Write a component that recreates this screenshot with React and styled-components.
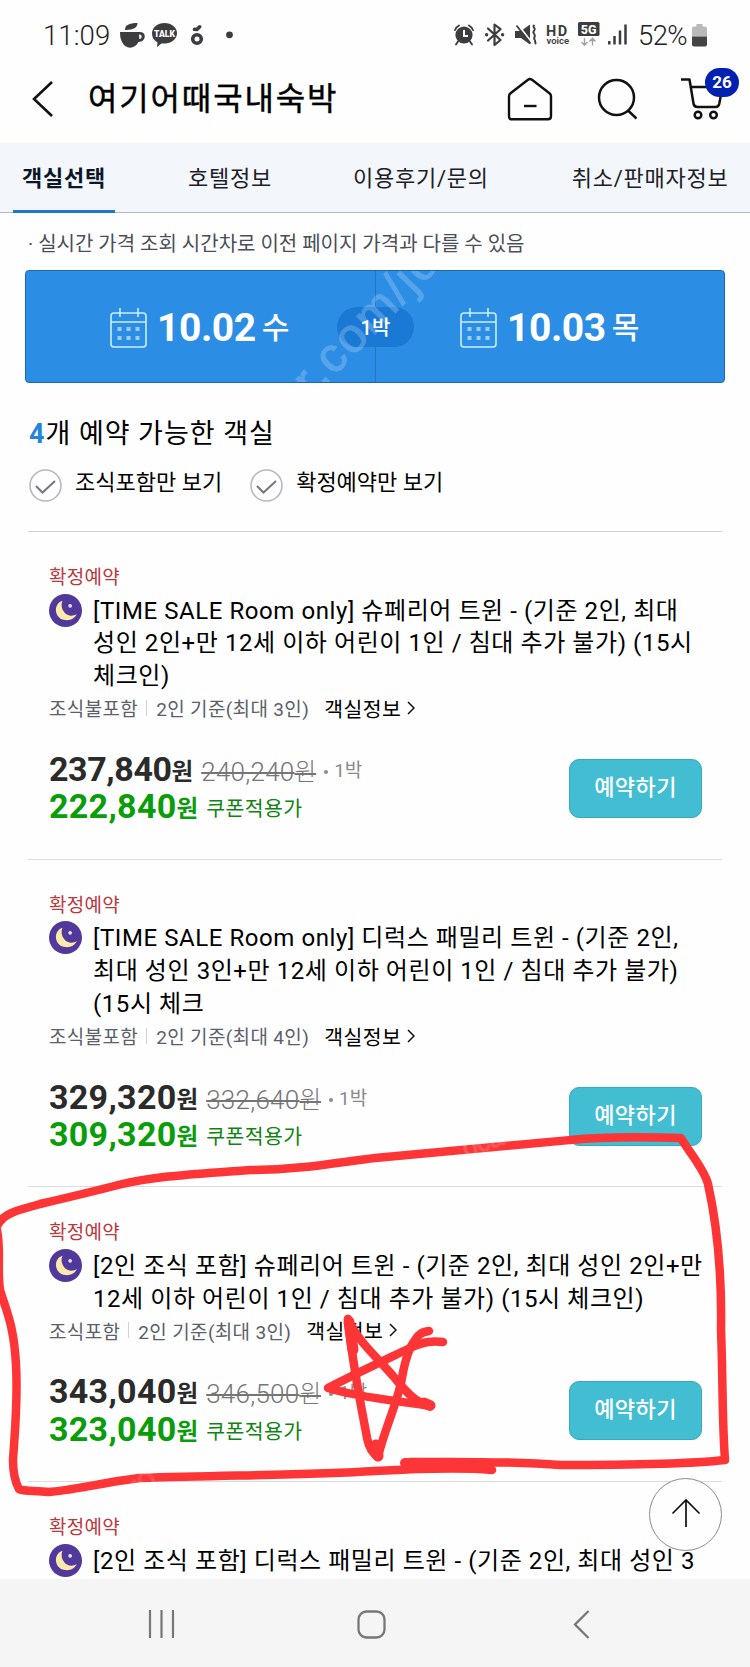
import React from "react";
import styled, { createGlobalStyle } from "styled-components";

const GlobalStyle = createGlobalStyle`
  * {
    box-sizing: border-box;
  }
  body {
    margin: 0;
    background: #fefefe;
    font-family: Roboto, "Noto Sans CJK KR", sans-serif;
    color: #111;
  }
  svg {
    display: block;
    flex: none;
  }
`;

const Screen = styled.div`
  position: relative;
  display: flex;
  flex-direction: column;
  width: 750px;
  height: 1667px;
  overflow: hidden;
  background: #fefefe;
  white-space: nowrap;
`;

const StatusBar = styled.div`
  display: flex;
  align-items: center;
  justify-content: space-between;
  height: 70px;
  padding: 0 43px;
  flex: none;
`;

const StatusGroup = styled.div`
  display: flex;
  align-items: center;
`;

const StatusText = styled.span`
  width: ${(p) => p.$width}px;
  padding-left: ${(p) => p.$pad || 0}px;
  font-size: 27.5px;
  font-weight: 300;
  letter-spacing: ${(p) => p.$spacing}px;
  color: #222;
`;

const Header = styled.header`
  display: flex;
  align-items: center;
  height: 73px;
  padding: 0 21px 15px 32px;
  flex: none;
`;

const HeaderTitle = styled.h1`
  flex: 1;
  margin: 0 0 0 34px;
  font-size: 32px;
  line-height: 42px;
  font-weight: 400;
  letter-spacing: 1.85px;
  color: #000;
  -webkit-text-stroke: 0.4px #000;
`;

const HeaderIcons = styled.div`
  display: flex;
  align-items: center;
  gap: 44px;
`;

const CartWrapper = styled.div`
  position: relative;
`;

const CartBadge = styled.span`
  position: absolute;
  left: 24px;
  top: -10px;
  width: 34px;
  height: 29px;
  border-radius: 15px;
  background: #0220b2;
  color: #fff;
  font-size: 17px;
  font-weight: 700;
  line-height: 29px;
  text-align: center;
`;

const Tabs = styled.nav`
  display: flex;
  height: 70px;
  padding: 0 0 0 13px;
  background: #f3f6fb;
  border-bottom: 1px solid #b3b9c3;
  flex: none;
`;

const Tab = styled.span`
  height: 70px;
  margin-left: ${(p) => p.$gap || 0}px;
  padding: 0 ${(p) => (p.$active ? 9 : 0)}px;
  border-bottom: 3px solid ${(p) => (p.$active ? "#2277c8" : "transparent")};
  font-size: 22px;
  font-weight: ${(p) => (p.$active ? 700 : 400)};
  letter-spacing: 0.75px;
  line-height: 71px;
  color: ${(p) => (p.$active ? "#0b1626" : "#1c2026")};
`;

const Notice = styled.p`
  margin: 0;
  padding-left: 28px;
  height: 57px;
  font-size: 20px;
  line-height: 62px;
  color: #4a4e58;
  flex: none;
`;

const DateBar = styled.div`
  position: relative;
  display: grid;
  grid-template-columns: 1fr 1fr;
  width: 700px;
  height: 113px;
  margin-left: 25px;
  border: 1px solid #1a68b4;
  border-radius: 4px;
  background: #2c8de5;
  flex: none;
`;

const DateCell = styled.div`
  display: flex;
  align-items: center;
  padding: 2px 0 0 84px;
  color: #fff;
  & + & {
    border-left: 1px solid #1f76c8;
  }
`;

const DateNumber = styled.b`
  margin-left: 10px;
  font-size: 39px;
  line-height: 50px;
  letter-spacing: -0.4px;
`;

const DateDay = styled.span`
  margin-left: 6px;
  font-size: 30px;
  font-weight: 500;
  line-height: 50px;
`;

const NightBadge = styled.span`
  position: absolute;
  left: 311px;
  top: 36px;
  width: 77px;
  height: 40px;
  border-radius: 20px;
  background: #1b79d6;
  color: #fff;
  font-size: 20px;
  font-weight: 500;
  line-height: 42px;
  text-align: center;
`;

const RoomCount = styled.h2`
  margin: 0;
  padding: 32px 0 0 29px;
  height: 82px;
  font-size: 27px;
  font-weight: 400;
  line-height: 38px;
  letter-spacing: 0.95px;
  color: #000;
  flex: none;
  b {
    color: #2384da;
  }
`;

const Filters = styled.div`
  display: flex;
  height: 66px;
  padding: 4px 0 0 29px;
  gap: 28px;
  flex: none;
`;

const Filter = styled.label`
  display: flex;
  gap: 13px;
  font-size: 22px;
  line-height: 28px;
  color: #000;
`;

const RoomList = styled.div`
  height: 1048px;
  margin: 0 28px;
  overflow: hidden;
  border-top: 1px solid #d4d4d4;
  flex: none;
`;

const RoomCard = styled.article`
  padding: 30px 20px 34px 21px;
  border-bottom: 1px solid #dcdcdc;
`;

const Tag = styled.div`
  height: 31.8px;
  font-size: 19px;
  line-height: 31px;
  letter-spacing: 0.3px;
  color: #b8383d;
`;

const TitleRow = styled.div`
  display: flex;
  gap: 11px;
`;

const RoomTitle = styled.div`
  font-size: 24px;
  line-height: 32.7px;
  letter-spacing: 0.57px;
  color: #000;
`;

const TitleLine = styled.div`
  height: 32.7px;
  padding-top: 1px;
`;

const Meta = styled.div`
  display: flex;
  align-items: center;
  height: 32px;
  margin-bottom: 26px;
  font-size: 19px;
  letter-spacing: 0.35px;
  color: #5b5f69;
`;

const MetaDivider = styled.i`
  width: 1px;
  height: 16px;
  margin: 0 9px 0 8px;
  background: #d0d2d6;
`;

const InfoLink = styled.span`
  display: flex;
  align-items: center;
  gap: 6px;
  margin-left: 15px;
  font-size: 20.5px;
  letter-spacing: 0.4px;
  color: #000;
`;

const PriceArea = styled.div`
  display: flex;
  justify-content: space-between;
`;

const PriceRow = styled.div`
  display: flex;
  align-items: baseline;
  height: 37.4px;
  line-height: 38px;
  color: ${(p) => p.$color};
`;

const Won = styled.span`
  font-size: 23.5px;
  letter-spacing: 0;
  line-height: 1;
  vertical-align: 1px;
`;

const Amount = styled.b`
  font-size: 34px;
  letter-spacing: ${(p) => p.$spacing}px;
`;

const OldPrice = styled.s`
  margin-left: 8px;
  font-size: 26px;
  font-weight: 300;
  letter-spacing: 0.25px;
  color: #757575;
  text-decoration-thickness: 2px;
`;

const Nights = styled.span`
  display: flex;
  align-items: center;
  gap: 6px;
  margin-left: 8px;
  align-self: flex-start;
  font-size: 19px;
  line-height: 41px;
  color: #8a8a8a;
  &::before {
    content: "";
    width: 4px;
    height: 4px;
    margin-top: 3px;
    border-radius: 50%;
    background: #8a8a8a;
  }
`;

const CouponLabel = styled.span`
  margin-left: 8px;
  align-self: flex-start;
  font-size: 20.5px;
  line-height: 44px;
  letter-spacing: 0.4px;
  color: #108410;
`;

const BookButton = styled.button`
  width: 133px;
  height: 59px;
  margin-top: 9px;
  padding: 0 0 7px;
  border: 1px solid #35a9bd;
  border-radius: 10px;
  background: #42bdd2;
  color: #fff;
  font: 500 22px Roboto, "Noto Sans CJK KR", sans-serif;
  letter-spacing: 0.4px;
`;

const SystemNav = styled.div`
  display: flex;
  align-items: center;
  gap: 181px;
  height: 88px;
  padding: 2px 0 0 147px;
  background: #f5f5f5;
  flex: none;
`;

const TopButton = styled.div`
  position: absolute;
  left: 649px;
  top: 1478px;
  width: 73px;
  height: 73px;
  border: 1px solid #8a8a8a;
  border-radius: 50%;
  background: #fefefe;
  display: flex;
  align-items: center;
  justify-content: center;
  padding-bottom: 3px;
`;

const Drawing = styled.svg`
  position: absolute;
  left: 0;
  top: 0;
  pointer-events: none;
`;

const rooms = [
  {
    title: [
      "[TIME SALE Room only] 슈페리어 트윈 - (기준 2인, 최대",
      "성인 2인+만 12세 이하 어린이 1인 / 침대 추가 불가) (15시",
      "체크인)",
    ],
    meal: "조식불포함",
    people: "2인 기준(최대 3인)",
    price: "237,840",
    priceSpacing: -0.4,
    old: "240,240",
    coupon: "222,840",
  },
  {
    title: [
      "[TIME SALE Room only] 디럭스 패밀리 트윈 - (기준 2인,",
      "최대 성인 3인+만 12세 이하 어린이 1인 / 침대 추가 불가)",
      "(15시 체크",
    ],
    meal: "조식불포함",
    people: "2인 기준(최대 4인)",
    price: "329,320",
    priceSpacing: 0.3,
    old: "332,640",
    coupon: "309,320",
  },
  {
    title: [
      "[2인 조식 포함] 슈페리어 트윈 - (기준 2인, 최대 성인 2인+만",
      "12세 이하 어린이 1인 / 침대 추가 불가) (15시 체크인)",
    ],
    meal: "조식포함",
    people: "2인 기준(최대 3인)",
    price: "343,040",
    priceSpacing: 0.3,
    old: "346,500",
    coupon: "323,040",
  },
  {
    title: ["[2인 조식 포함] 디럭스 패밀리 트윈 - (기준 2인, 최대 성인 3"],
  },
];

function LeftStatusIcons() {
  return (
    <svg width="118" height="30" viewBox="118 20 118 30" fill="#3d3d3f">
      <path d="M120 32h20.500c6 0 6 10-2 10c-4 7.500-13 7.500-16.500 0c-1.500-3-2-6-2-10z" />
      <path d="M139 34.500c3.500-.5 3.500 4.500 .3 4.500z" fill="#fefefe" />
      <path d="M125 30c0-5 4-7 12.500-7c0 4-3 7-12.500 7z" />
      <path d="M164.500 23c7 0 12.500 4.600 12.500 10.300s-5.500 10.200-12.500 10.200l-3 0-4.500 3.500.5-4.600c-3.500-1.900-5.500-5-5.500-9.100c0-5.700 5.500-10.300 12.500-10.300z" />
      <text
        x="164.500"
        y="37"
        fill="#fff"
        fontSize="8.600"
        fontWeight="900"
        textAnchor="middle"
        fontFamily="Roboto"
      >
        TALK
      </text>
      <circle cx="197" cy="39" r="4.300" fill="none" stroke="#3d3d3f" strokeWidth="3.600" />
      <path d="M194.500 29.300l2.500.2 2.700-2.700" stroke="#3d3d3f" strokeWidth="3.600" strokeLinecap="round" fill="none" />
      <circle cx="229.500" cy="34.800" r="3.400" />
    </svg>
  );
}

function RightStatusIcons() {
  return (
    <svg width="180" height="30" viewBox="452 20 180 30" fill="#3d3d3f">
      <circle cx="464" cy="35" r="8.600" />
      <path
        d="M455 30a9 9 0 0 1 4-4.500M473 30a9 9 0 0 0-4-4.500M458 41.500l-2 3M470 41.500l2 3"
        stroke="#3d3d3f"
        strokeWidth="1.900"
        strokeLinecap="round"
        fill="none"
      />
      <path d="M464 30v6h4" stroke="#fff" strokeWidth="2" fill="none" />
      <path
        d="M488 28.500l12.500 11.500-6 5v-20.500l6 4.700-12.500 11.300"
        stroke="#3d3d3f"
        strokeWidth="2.200"
        strokeLinejoin="round"
        strokeLinecap="round"
        fill="none"
      />
      <circle cx="486.600" cy="34.700" r="1.700" />
      <circle cx="502.600" cy="34.700" r="1.700" />
      <path d="M515 31h6l9-6.500v20l-9-6.500h-6z" />
      <path d="M517.500 24l14 18" stroke="#fefefe" strokeWidth="1.800" />
      <path d="M516.500 25.500l14 18" stroke="#3d3d3f" strokeWidth="1.800" />
      <path
        d="M534.500 25c-3 2 1.500 3 0 5s-1.500 2.500 0 4.500s-1.500 3 0 5s0 3 1.500 4.500"
        stroke="#3d3d3f"
        strokeWidth="2"
        fill="none"
      />
      <text fontFamily="Roboto">
        <tspan x="546" y="35.500" fontSize="14.500" fontWeight="700" letterSpacing="1.600">
          HD
        </tspan>
        <tspan x="546.500" y="43.500" fontSize="9.500" fontWeight="600">
          voice
        </tspan>
      </text>
      <rect x="578" y="22" width="21.500" height="14" rx="1.500" />
      <text x="588.700" y="33.500" fill="#fff" fontSize="12.500" fontWeight="800" textAnchor="middle" fontFamily="Roboto">
        5G
      </text>
      <path
        d="M584.500 38v7m-3-3l3 3.300 3-3.300M592.500 45.500v-7m-3 3l3-3.300 3 3.300"
        stroke="#a2a2a2"
        strokeWidth="1.400"
        fill="none"
      />
      <path
        d="M609.300 41v3.500M614.500 36v8.500M620 30.500v14M625.500 24.500v20"
        stroke="#3d3d3f"
        strokeWidth="2.500"
      />
    </svg>
  );
}

function Battery() {
  return (
    <svg width="15" height="23" viewBox="0 0 15 23">
      <path d="M4.500 0h6v2.500h2.500a2 2 0 0 1 2 2v8h-15v-8a2 2 0 0 1 2-2h2.500z" fill="#b9b9b9" />
      <path d="M0 12.500h15v8a2 2 0 0 1-2 2h-11a2 2 0 0 1-2-2z" fill="#444" />
    </svg>
  );
}

function Calendar() {
  const dots = [];
  for (let row = 0; row < 2; row++) {
    for (let col = 0; col < 3; col++) {
      dots.push(
        <rect key={`${row}-${col}`} x={7.5 + col * 9} y={19 + row * 9} width="4" height="4" fill="#9dcdf8" />
      );
    }
  }
  return (
    <svg width="37" height="40" viewBox="0 0 37 40">
      <g fill="none" stroke="#c9f0ff" strokeWidth="1.600">
        <rect x="1" y="5" width="35" height="34" rx="3" />
        <path d="M1 14h35M10 0v9M28 0v9" />
      </g>
      {dots}
    </svg>
  );
}

function CheckCircle() {
  return (
    <svg width="33" height="33" viewBox="0 0 33 33" fill="none">
      <circle cx="16.500" cy="16.500" r="15.500" stroke="#b8b8bb" strokeWidth="1.600" />
      <path d="M7 17l6.500 6.500 12.500-11.500" stroke="#77777d" strokeWidth="2" />
    </svg>
  );
}

function Moon() {
  return (
    <svg width="33" height="33" viewBox="0 0 32 32">
      <circle cx="16" cy="16" r="16" fill="#51389b" />
      <path d="M13 6.500c-9 3-8 16 1 18.500c6 1.500 11-1 13-5.500c-4 2.500-9 2-12-1.500s-3.500-7.500-2-11.500z" fill="#fbe9ae" />
      <circle cx="20.500" cy="11.500" r="1.800" fill="#e9e2ff" />
    </svg>
  );
}

function Room({ room }) {
  return (
    <RoomCard>
      <Tag>확정예약</Tag>
      <TitleRow>
        <Moon />
        <RoomTitle>
          {room.title.map((line) => (
            <TitleLine key={line}>{line}</TitleLine>
          ))}
        </RoomTitle>
      </TitleRow>
      {room.price && (
        <>
          <Meta>
            {room.meal}
            <MetaDivider />
            {room.people}
            <InfoLink>
              객실정보
              <svg width="8" height="14" viewBox="0 0 8 14" fill="none" stroke="#111" strokeWidth="1.500">
                <path d="M1 1l6 6-6 6" />
              </svg>
            </InfoLink>
          </Meta>
          <PriceArea>
            <div>
              <PriceRow $color="#2b2b2b">
                <Amount $spacing={room.priceSpacing}>
                  {room.price}
                  <Won>원</Won>
                </Amount>
                <OldPrice>
                  {room.old}
                  <Won>원</Won>
                </OldPrice>
                <Nights>1박</Nights>
              </PriceRow>
              <PriceRow $color="#0a9d0a">
                <Amount $spacing={0.3}>
                  {room.coupon}
                  <Won>원</Won>
                </Amount>
                <CouponLabel>쿠폰적용가</CouponLabel>
              </PriceRow>
            </div>
            <BookButton>예약하기</BookButton>
          </PriceArea>
        </>
      )}
    </RoomCard>
  );
}

// red pen marks and the faint diagonal site name
function PenMarks() {
  return (
    <Drawing width="750" height="1667" viewBox="0 0 750 1667" fill="none">
      <g stroke="#fd3536" strokeWidth="8.500" strokeLinecap="round" strokeLinejoin="round">
        <path d="M-3 1226C4 1212 20 1210 40 1204C70 1197 95 1191 118 1185C160 1175 200 1174 250 1170C300 1170 340 1162 375 1158C450 1151 510 1146 570 1140C610 1136 650 1137 681 1138C686 1148 704 1168 708 1184C716 1220 722 1270 721 1330C723 1380 722 1420 725 1460C690 1464 620 1465 560 1465C510 1461 460 1462 410 1462" />
        <path d="M492 1470C470 1468 430 1468 375 1471C310 1475 240 1475 140 1478C105 1482 70 1491 48 1492C38 1490 24 1492 19 1489C14 1480 13 1468 13 1460C15 1430 18 1400 16 1365C14 1325 6 1310 0 1290C-3 1270 1 1250 -3 1230" />
        <path d="M405 1463C430 1464 460 1465 488 1467" strokeWidth="10" />
        <path d="M348 1319C353 1370 364 1420 367 1438C369 1448 373 1454 378 1457C384 1430 397 1405 402 1378C405 1360 409 1348 415 1340C420 1332 424 1332 429 1331" />
        <path d="M348 1319C358 1342 378 1358 393 1376C401 1385 409 1397 420 1402L430 1406C400 1401 360 1398 328 1388C355 1374 385 1360 410 1348C425 1341 433 1341 443 1342" />
        <path d="M349 1322l4 28M424 1403l6 2.500M376 1445l2 11" strokeWidth="11" />
      </g>
      <g fill="#fff" stroke="#fff" fontFamily="Liberation Sans">
        <svg x="26" y="271" width="698" height="111" viewBox="26 271 698 111">
          <text transform="translate(312 399) rotate(-46)" fontSize="48" letterSpacing="2.500" strokeWidth="1.200" opacity="0.200">
            r.com/jo
          </text>
        </svg>
        <text transform="translate(138 1498) rotate(-42)" fontSize="30" opacity="0.120">
          ro
        </text>
        <text transform="translate(466 1158) rotate(-20)" fontSize="26" opacity="0.160">
          oca
        </text>
      </g>
    </Drawing>
  );
}

export default function App() {
  return (
    <Screen>
      <GlobalStyle />
      <StatusBar>
        <StatusGroup>
          <StatusText $width={75} $spacing={0.1}>
            11:09
          </StatusText>
          <LeftStatusIcons />
        </StatusGroup>
        <StatusGroup>
          <RightStatusIcons />
          <StatusText $width={60} $pad={6} $spacing={-0.6}>
            52%
          </StatusText>
          <Battery />
        </StatusGroup>
      </StatusBar>
      <Header>
        <svg width="22" height="38" viewBox="0 0 22 38" fill="none" stroke="#111" strokeWidth="2.600">
          <path d="M20 2l-18 17 18 17" />
        </svg>
        <HeaderTitle>여기어때국내숙박</HeaderTitle>
        <HeaderIcons>
          <svg width="46" height="44" viewBox="0 0 46 44" fill="none" stroke="#111" strokeWidth="2.400" strokeLinejoin="round">
            <path d="M21 2.800q2-1.500 4 0l17.500 13.500q1.500 1.200 1.500 3v20q0 3-3 3h-36q-3 0-3-3v-20q0-1.800 1.500-3z" />
            <path d="M17 29h12.500" />
          </svg>
          <svg width="40" height="42" viewBox="0 0 40 42" fill="none" stroke="#111" strokeWidth="2.500">
            <circle cx="19.500" cy="19.500" r="17.500" />
            <path d="M31 32.500l8.500 8" />
          </svg>
          <CartWrapper>
            <svg width="48" height="42" viewBox="0 0 48 42" fill="none" stroke="#111" strokeWidth="2.500" strokeLinejoin="round">
              <path d="M0 1.500h8.500l4 24q.5 3.500 4 3.500h18q3 0 3.700-3l3.300-17h-31.500" />
              <circle cx="17" cy="37" r="3.300" />
              <circle cx="32.500" cy="37" r="3.300" />
            </svg>
            <CartBadge>26</CartBadge>
          </CartWrapper>
        </HeaderIcons>
      </Header>
      <Tabs>
        <Tab $active>객실선택</Tab>
        <Tab $gap={73}>호텔정보</Tab>
        <Tab $gap={81}>이용후기/문의</Tab>
        <Tab $gap={83}>취소/판매자정보</Tab>
      </Tabs>
      <Notice>· 실시간 가격 조회 시간차로 이전 페이지 가격과 다를 수 있음</Notice>
      <DateBar>
        <DateCell>
          <Calendar />
          <DateNumber>10.02</DateNumber>
          <DateDay>수</DateDay>
        </DateCell>
        <DateCell>
          <Calendar />
          <DateNumber>10.03</DateNumber>
          <DateDay>목</DateDay>
        </DateCell>
        <NightBadge>1박</NightBadge>
      </DateBar>
      <RoomCount>
        <b>4</b>개 예약 가능한 객실
      </RoomCount>
      <Filters>
        <Filter>
          <CheckCircle />
          조식포함만 보기
        </Filter>
        <Filter>
          <CheckCircle />
          확정예약만 보기
        </Filter>
      </Filters>
      <RoomList>
        {rooms.map((room) => (
          <Room key={room.title[0]} room={room} />
        ))}
      </RoomList>
      <SystemNav>
        <svg width="29" height="28" viewBox="0 0 29 28" stroke="#777" strokeWidth="2.200">
          <path d="M3 0v28M14.500 0v28M26 0v28" />
        </svg>
        <svg width="29" height="29" viewBox="0 0 29 29" fill="none" stroke="#777" strokeWidth="2.300">
          <rect x="1.500" y="1.500" width="26" height="26" rx="8" />
        </svg>
        <svg width="29" height="29" viewBox="-6 0 29 29" fill="none" stroke="#777" strokeWidth="2.300">
          <path d="M15.500 1l-13.500 13.500 13.500 13.500" />
        </svg>
      </SystemNav>
      <TopButton>
        <svg width="30" height="30" viewBox="0 0 30 30" fill="none" stroke="#111" strokeWidth="1.700">
          <path d="M15 29v-27M1.500 15.500l13.500-13.500 13.500 13.500" />
        </svg>
      </TopButton>
      <PenMarks />
    </Screen>
  );
}
